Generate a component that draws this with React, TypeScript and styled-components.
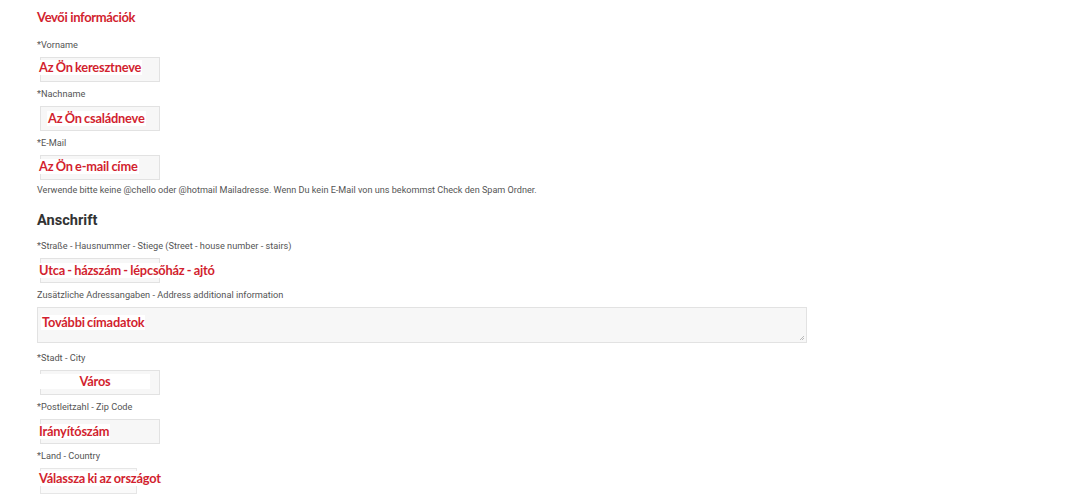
import React from "react";
import styled, { createGlobalStyle } from "styled-components";

const Global = createGlobalStyle`
  html, body { margin: 0; padding: 0; background: #fff; }
  body { font-family: Roboto, "Liberation Sans", Arial, sans-serif; }
`;

const RED = "#d21f2f";

const Page = styled.div`
  width: 1080px;
  height: 502px;
  overflow: hidden;
  box-sizing: border-box;
  padding: 9px 0 0 37px;
  display: flex;
  flex-direction: column;
  align-items: flex-start;
`;

const Title = styled.div`
  font-family: Lato, "Open Sans", sans-serif;
  font-weight: 700;
  font-size: 13px;
  letter-spacing: -0.35px;
  line-height: 16px;
  color: ${RED};
  background: #fff;
  padding-right: 40px;
  margin: 0 0 14px 0;
`;

const Field = styled.div<{ $gap?: number }>`
  display: flex;
  flex-direction: column;
  align-items: flex-start;
  margin-bottom: ${(p) => p.$gap ?? 6}px;
`;

const Label = styled.div`
  font-size: 9.2px;
  line-height: 12px;
  color: #555;
  margin-bottom: 6px;
  white-space: nowrap;
`;

const Box = styled.div<{ $w: number; $h: number; $indent: number }>`
  position: relative;
  box-sizing: border-box;
  width: ${(p) => p.$w}px;
  height: ${(p) => p.$h}px;
  margin-left: ${(p) => p.$indent}px;
  background: #f7f7f7;
  border: 1px solid #e2e2e2;
`;

const SelectBox = styled(Box)`
  background: #fafafa;
  border-color: #e6e6e6;
`;

const Resize = styled.svg`
  position: absolute;
  right: 1px;
  bottom: 1px;
`;

const Overlay = styled.span<{ $x: number; $y: number; $w?: number }>`
  position: absolute;
  left: ${(p) => p.$x}px;
  top: ${(p) => p.$y}px;
  ${(p) => (p.$w ? `width: ${p.$w}px; text-align: center;` : "")}
  background: #fff;
  padding: 0 1px;
  font-family: Lato, "Open Sans", sans-serif;
  font-weight: 700;
  font-size: 12.8px;
  letter-spacing: -0.2px;
  word-spacing: -0.6px;
  line-height: 15px;
  color: ${RED};
  white-space: nowrap;
`;

const Help = styled.div`
  font-size: 9.1px;
  line-height: 12px;
  color: #555;
  margin: -2px 0 0 0;
  white-space: nowrap;
`;

const Heading = styled.div`
  font-size: 14.6px;
  font-weight: 700;
  line-height: 18px;
  color: #333;
  margin: 15px 0 11px 0;
`;

type F = {
  label: string;
  text: string;
  x: number;
  y: number;
  w?: number;
  h?: number;
  indent?: number;
  gap?: number;
  ow?: number;
  kind?: "input" | "area" | "select";
};

const top: F[] = [
  { label: "*Vorname", text: "Az Ön keresztneve", x: -3, y: 2 },
  { label: "*Nachname", text: "Az Ön családneve", x: 6, y: 4 },
  { label: "*E-Mail", text: "Az Ön e-mail címe", x: -3, y: 3 },
];

const addr: F[] = [
  { label: "*Straße - Hausnummer - Stiege (Street - house number - stairs)", text: "Utca - házszám - lépcsőház - ajtó", x: -3, y: 4 },
  { label: "Zusätzliche Adressangaben - Address additional information", text: "További címadatok", x: 3, y: 7, w: 770, h: 36, indent: 0, gap: 9, kind: "area" },
  { label: "*Stadt - City", text: "Város", x: -1, y: 3, ow: 108 },
  { label: "*Postleitzahl - Zip Code", text: "Irányítószám", x: -3, y: 4 },
  { label: "*Land - Country", text: "Válassza ki az országot", x: -3, y: 2, w: 97, h: 26, kind: "select" },
];

function FieldRow({ f }: { f: F }) {
  const B = f.kind === "select" ? SelectBox : Box;
  return (
    <Field $gap={f.gap}>
      <Label>{f.label}</Label>
      <B $w={f.w ?? 120} $h={f.h ?? 25} $indent={f.indent ?? 3}>
        <Overlay $x={f.x} $y={f.y} $w={f.ow}>
          {f.text}
        </Overlay>
        {f.kind === "area" && (
          <Resize width="6" height="6" viewBox="0 0 6 6">
            <path d="M5 1 L1 5 M5 3 L3 5" stroke="#aaa" strokeWidth="0.8" />
          </Resize>
        )}
      </B>
    </Field>
  );
}

export default function App() {
  return (
    <>
      <Global />
      <Page>
        <Title>Vevői információk</Title>
        {top.map((f) => (
          <FieldRow key={f.label} f={f} />
        ))}
        <Help>
          Verwende bitte keine @chello oder @hotmail Mailadresse. Wenn Du kein E-Mail von uns bekommst Check den Spam Ordner.
        </Help>
        <Heading>Anschrift</Heading>
        {addr.map((f) => (
          <FieldRow key={f.label} f={f} />
        ))}
      </Page>
    </>
  );
}
